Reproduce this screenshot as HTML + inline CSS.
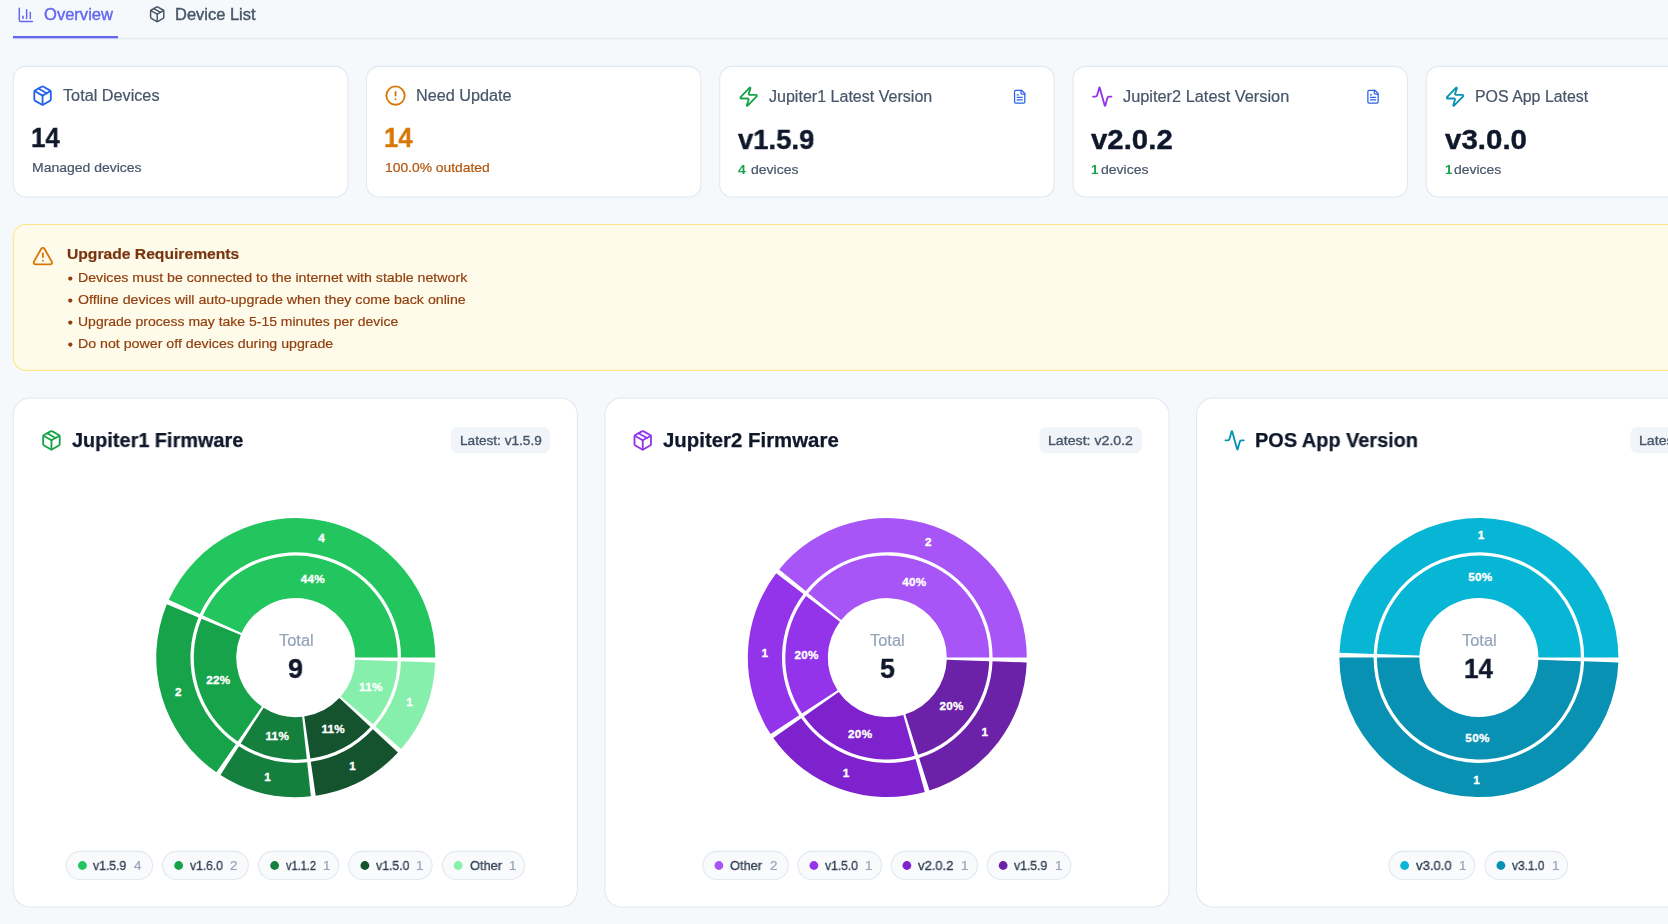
<!DOCTYPE html>
<html><head><meta charset="utf-8"><title>Overview</title>
<style>
*{box-sizing:border-box;margin:0;padding:0}
html,body{width:1668px;height:924px;overflow:hidden;background:#f6f9fc;font-family:"Liberation Sans",sans-serif;}
#root{position:relative;width:1668px;height:924px;overflow:hidden}
.t{position:absolute;white-space:pre;line-height:1;transform-origin:0 0;will-change:transform}
.pl{font-family:"Liberation Sans",sans-serif;font-weight:700;font-size:11.7px;letter-spacing:0.3px;fill:#fff;stroke:#fff;stroke-width:0.35px;text-anchor:middle}
svg.layer{position:absolute;left:0;top:0}
</style></head><body><div id="root">
<svg class="layer" width="1668" height="924" viewBox="0 0 1668 924">
<rect x="13" y="38.25" width="1700" height="1.1" fill="#e2e8f0"/>
<rect x="13" y="36.0" width="105" height="2.3" fill="#6366f1"/>
<rect x="13.27" y="66.40" width="334.50" height="130.60" rx="12.6" fill="#fff" stroke="#e2e8f0" stroke-width="1.1"/>
<rect x="366.50" y="66.40" width="334.50" height="130.60" rx="12.6" fill="#fff" stroke="#e2e8f0" stroke-width="1.1"/>
<rect x="719.73" y="66.40" width="334.50" height="130.60" rx="12.6" fill="#fff" stroke="#e2e8f0" stroke-width="1.1"/>
<rect x="1072.96" y="66.40" width="334.50" height="130.60" rx="12.6" fill="#fff" stroke="#e2e8f0" stroke-width="1.1"/>
<rect x="1426.19" y="66.40" width="334.50" height="130.60" rx="12.6" fill="#fff" stroke="#e2e8f0" stroke-width="1.1"/>
<rect x="13.27" y="224.45" width="1746.73" height="145.95" rx="12.6" fill="#fffbeb" stroke="#fde68a" stroke-width="1.1"/>
<rect x="13.27" y="398.00" width="564.13" height="509.00" rx="17.0" fill="#fff" stroke="#e2e8f0" stroke-width="1.1"/>
<rect x="604.87" y="398.00" width="564.13" height="509.00" rx="17.0" fill="#fff" stroke="#e2e8f0" stroke-width="1.1"/>
<rect x="1196.47" y="398.00" width="564.13" height="509.00" rx="17.0" fill="#fff" stroke="#e2e8f0" stroke-width="1.1"/>
<g transform="translate(17.10,6.00) scale(0.73333)" fill="none" stroke="#6366f1" stroke-width="2" stroke-linecap="round" stroke-linejoin="round"><path d="M3 3v16a2 2 0 0 0 2 2h16"/><path d="M18 17V9"/><path d="M13 17V5"/><path d="M8 17v-3"/></g>
<g transform="translate(148.40,5.40) scale(0.73333)" fill="none" stroke="#475569" stroke-width="2" stroke-linecap="round" stroke-linejoin="round"><path d="M11 21.73a2 2 0 0 0 2 0l7-4A2 2 0 0 0 21 16V8a2 2 0 0 0-1-1.73l-7-4a2 2 0 0 0-2 0l-7 4A2 2 0 0 0 3 8v8a2 2 0 0 0 1 1.73z"/><path d="M12 22V12"/><polyline points="3.29 7 12 12 20.71 7"/><path d="m7.5 4.27 9 5.15"/></g>
<g transform="translate(31.55,84.60) scale(0.91667)" fill="none" stroke="#2563eb" stroke-width="2" stroke-linecap="round" stroke-linejoin="round"><path d="M11 21.73a2 2 0 0 0 2 0l7-4A2 2 0 0 0 21 16V8a2 2 0 0 0-1-1.73l-7-4a2 2 0 0 0-2 0l-7 4A2 2 0 0 0 3 8v8a2 2 0 0 0 1 1.73z"/><path d="M12 22V12"/><polyline points="3.29 7 12 12 20.71 7"/><path d="m7.5 4.27 9 5.15"/></g>
<g transform="translate(384.55,84.60) scale(0.91667)" fill="none" stroke="#d97706" stroke-width="2" stroke-linecap="round" stroke-linejoin="round"><circle cx="12" cy="12" r="10"/><line x1="12" x2="12" y1="8" y2="12"/><line x1="12" x2="12.01" y1="16" y2="16"/></g>
<g transform="translate(737.65,85.70) scale(0.91667)" fill="none" stroke="#16a34a" stroke-width="2" stroke-linecap="round" stroke-linejoin="round"><path d="M4 14a1 1 0 0 1-.78-1.63l9.9-10.2a.5.5 0 0 1 .86.46l-1.92 6.02A1 1 0 0 0 13 10h7a1 1 0 0 1 .78 1.63l-9.9 10.2a.5.5 0 0 1-.86-.46l1.92-6.02A1 1 0 0 0 11 14z"/></g>
<g transform="translate(1012.00,89.00) scale(0.64167)" fill="none" stroke="#2d63ec" stroke-width="2" stroke-linecap="round" stroke-linejoin="round"><path d="M15 2H6a2 2 0 0 0-2 2v16a2 2 0 0 0 2 2h12a2 2 0 0 0 2-2V7Z"/><path d="M14 2v4a2 2 0 0 0 2 2h4"/><path d="M10 9H8"/><path d="M16 13H8"/><path d="M16 17H8"/></g>
<g transform="translate(1091.25,85.70) scale(0.91667)" fill="none" stroke="#9333ea" stroke-width="2" stroke-linecap="round" stroke-linejoin="round"><path d="M22 12h-2.48a2 2 0 0 0-1.93 1.46l-2.35 8.36a.25.25 0 0 1-.48 0L9.24 2.18a.25.25 0 0 0-.48 0l-2.35 8.36A2 2 0 0 1 4.49 12H2"/></g>
<g transform="translate(1365.30,89.00) scale(0.64167)" fill="none" stroke="#2d63ec" stroke-width="2" stroke-linecap="round" stroke-linejoin="round"><path d="M15 2H6a2 2 0 0 0-2 2v16a2 2 0 0 0 2 2h12a2 2 0 0 0 2-2V7Z"/><path d="M14 2v4a2 2 0 0 0 2 2h4"/><path d="M10 9H8"/><path d="M16 13H8"/><path d="M16 17H8"/></g>
<g transform="translate(1444.05,85.70) scale(0.91667)" fill="none" stroke="#0891b2" stroke-width="2" stroke-linecap="round" stroke-linejoin="round"><path d="M4 14a1 1 0 0 1-.78-1.63l9.9-10.2a.5.5 0 0 1 .86.46l-1.92 6.02A1 1 0 0 0 13 10h7a1 1 0 0 1 .78 1.63l-9.9 10.2a.5.5 0 0 1-.86-.46l1.92-6.02A1 1 0 0 0 11 14z"/></g>
<g transform="translate(31.85,245.10) scale(0.91667)" fill="none" stroke="#d97706" stroke-width="2" stroke-linecap="round" stroke-linejoin="round"><path d="m21.73 18-8-14a2 2 0 0 0-3.48 0l-8 14A2 2 0 0 0 4 21h16a2 2 0 0 0 1.73-3"/><path d="M12 9v4"/><path d="M12 17h.01"/></g>
<circle cx="70.3" cy="278.60" r="2.15" fill="#92400e"/>
<circle cx="70.3" cy="300.60" r="2.15" fill="#92400e"/>
<circle cx="70.3" cy="322.60" r="2.15" fill="#92400e"/>
<circle cx="70.3" cy="344.60" r="2.15" fill="#92400e"/>
<g transform="translate(40.45,429.30) scale(0.91667)" fill="none" stroke="#16a34a" stroke-width="2" stroke-linecap="round" stroke-linejoin="round"><path d="M11 21.73a2 2 0 0 0 2 0l7-4A2 2 0 0 0 21 16V8a2 2 0 0 0-1-1.73l-7-4a2 2 0 0 0-2 0l-7 4A2 2 0 0 0 3 8v8a2 2 0 0 0 1 1.73z"/><path d="M12 22V12"/><polyline points="3.29 7 12 12 20.71 7"/><path d="m7.5 4.27 9 5.15"/></g>
<g transform="translate(631.75,429.30) scale(0.91667)" fill="none" stroke="#9333ea" stroke-width="2" stroke-linecap="round" stroke-linejoin="round"><path d="M11 21.73a2 2 0 0 0 2 0l7-4A2 2 0 0 0 21 16V8a2 2 0 0 0-1-1.73l-7-4a2 2 0 0 0-2 0l-7 4A2 2 0 0 0 3 8v8a2 2 0 0 0 1 1.73z"/><path d="M12 22V12"/><polyline points="3.29 7 12 12 20.71 7"/><path d="m7.5 4.27 9 5.15"/></g>
<g transform="translate(1223.65,429.30) scale(0.91667)" fill="none" stroke="#0891b2" stroke-width="2" stroke-linecap="round" stroke-linejoin="round"><path d="M22 12h-2.48a2 2 0 0 0-1.93 1.46l-2.35 8.36a.25.25 0 0 1-.48 0L9.24 2.18a.25.25 0 0 0-.48 0l-2.35 8.36A2 2 0 0 1 4.49 12H2"/></g>
<rect x="450.75" y="427.00" width="99.25" height="26.20" rx="6.6" fill="#f1f5f9"/>
<rect x="1039.50" y="427.00" width="102.50" height="26.20" rx="6.6" fill="#f1f5f9"/>
<rect x="1630.50" y="427.00" width="102.50" height="26.20" rx="6.6" fill="#f1f5f9"/>
<path d="M397.750,657.600A102.0,102.0,0,0,0,202.893,615.391L241.583,632.978A59.5,59.5,0,0,1,355.250,657.600Z" fill="#22c55e"/>
<path d="M435.250,657.600A139.5,139.5,0,0,0,168.754,599.873L199.889,614.026A105.3,105.3,0,0,1,401.050,657.600Z" fill="#22c55e"/>
<path d="M201.476,618.658A102.0,102.0,0,0,0,237.732,741.492L261.906,706.537A59.5,59.5,0,0,1,240.757,634.884Z" fill="#16a34a"/>
<path d="M166.817,604.341A139.5,139.5,0,0,0,216.402,772.335L235.855,744.207A105.3,105.3,0,0,1,198.426,617.398Z" fill="#16a34a"/>
<path d="M240.695,743.466A102.0,102.0,0,0,0,306.805,758.999L302.199,716.749A59.5,59.5,0,0,1,263.635,707.689Z" fill="#15803d"/>
<path d="M220.455,775.035A139.5,139.5,0,0,0,310.870,796.278L307.163,762.280A105.3,105.3,0,0,1,238.914,746.244Z" fill="#15803d"/>
<path d="M310.337,758.552A102.0,102.0,0,0,0,370.483,727.019L339.344,698.094A59.5,59.5,0,0,1,304.259,716.488Z" fill="#14532d"/>
<path d="M315.700,795.666A139.5,139.5,0,0,0,397.958,752.541L372.901,729.265A105.3,105.3,0,0,1,310.809,761.818Z" fill="#14532d"/>
<path d="M372.860,724.369A102.0,102.0,0,0,0,397.688,661.160L355.214,659.677A59.5,59.5,0,0,1,340.731,696.548Z" fill="#86efac"/>
<path d="M401.209,748.916A139.5,139.5,0,0,0,435.165,662.468L400.986,661.275A105.3,105.3,0,0,1,375.355,726.529Z" fill="#86efac"/>
<text x="312.85" y="583" class="pl">44%</text>
<text x="321.66" y="542" class="pl">4</text>
<text x="218.30" y="684" class="pl">22%</text>
<text x="178.36" y="696" class="pl">2</text>
<text x="277.28" y="740" class="pl">11%</text>
<text x="267.75" y="781" class="pl">1</text>
<text x="333.24" y="733" class="pl">11%</text>
<text x="352.58" y="770" class="pl">1</text>
<text x="370.91" y="691" class="pl">11%</text>
<text x="409.68" y="706" class="pl">1</text>
<path d="M989.300,657.600A102.0,102.0,0,0,0,808.256,593.133L841.191,619.994A59.5,59.5,0,0,1,946.800,657.600Z" fill="#a855f7"/>
<path d="M1026.800,657.600A139.5,139.5,0,0,0,779.195,569.432L805.698,591.047A105.3,105.3,0,0,1,992.600,657.600Z" fill="#a855f7"/>
<path d="M806.054,595.931A102.0,102.0,0,0,0,801.950,713.451L837.513,690.180A59.5,59.5,0,0,1,839.906,621.626Z" fill="#9333ea"/>
<path d="M776.184,573.258A139.5,139.5,0,0,0,770.571,733.985L799.189,715.258A105.3,105.3,0,0,1,803.425,593.936Z" fill="#9333ea"/>
<path d="M803.951,716.396A102.0,102.0,0,0,0,914.730,755.843L903.301,714.908A59.5,59.5,0,0,1,838.680,691.898Z" fill="#7e22ce"/>
<path d="M773.308,738.012A139.5,139.5,0,0,0,924.814,791.961L915.617,759.021A105.3,105.3,0,0,1,801.255,718.298Z" fill="#7e22ce"/>
<path d="M918.142,754.825A102.0,102.0,0,0,0,989.238,661.160L946.764,659.677A59.5,59.5,0,0,1,905.291,714.315Z" fill="#6b21a8"/>
<path d="M929.481,790.570A139.5,139.5,0,0,0,1026.715,662.468L992.536,661.275A105.3,105.3,0,0,1,919.140,757.971Z" fill="#6b21a8"/>
<text x="914.39" y="586" class="pl">40%</text>
<text x="928.36" y="546" class="pl">2</text>
<text x="806.60" y="659" class="pl">20%</text>
<text x="764.97" y="657" class="pl">1</text>
<text x="860.21" y="738" class="pl">20%</text>
<text x="846.24" y="777" class="pl">1</text>
<text x="951.62" y="710" class="pl">20%</text>
<text x="984.80" y="736" class="pl">1</text>
<path d="M1580.900,657.600A102.0,102.0,0,0,0,1376.962,654.040L1419.436,655.523A59.5,59.5,0,0,1,1538.400,657.600Z" fill="#06b6d4"/>
<path d="M1618.400,657.600A139.5,139.5,0,0,0,1339.485,652.732L1373.664,653.925A105.3,105.3,0,0,1,1584.200,657.600Z" fill="#06b6d4"/>
<path d="M1376.900,657.600A102.0,102.0,0,0,0,1580.838,661.160L1538.364,659.677A59.5,59.5,0,0,1,1419.400,657.600Z" fill="#0891b2"/>
<path d="M1339.400,657.600A139.5,139.5,0,0,0,1618.315,662.468L1584.136,661.275A105.3,105.3,0,0,1,1373.600,657.600Z" fill="#0891b2"/>
<text x="1480.31" y="581" class="pl">50%</text>
<text x="1481.04" y="539" class="pl">1</text>
<text x="1477.49" y="742" class="pl">50%</text>
<text x="1476.76" y="784" class="pl">1</text>
<rect x="66.15" y="851.40" width="86.45" height="28.10" rx="14.05" fill="#f8fafc" stroke="#e2e8f0" stroke-width="1.1"/>
<circle cx="82.40" cy="865.5" r="4.4" fill="#22c55e"/>
<rect x="162.40" y="851.40" width="85.95" height="28.10" rx="14.05" fill="#f8fafc" stroke="#e2e8f0" stroke-width="1.1"/>
<circle cx="178.65" cy="865.5" r="4.4" fill="#16a34a"/>
<rect x="258.40" y="851.40" width="80.45" height="28.10" rx="14.05" fill="#f8fafc" stroke="#e2e8f0" stroke-width="1.1"/>
<circle cx="274.65" cy="865.5" r="4.4" fill="#15803d"/>
<rect x="348.65" y="851.40" width="83.45" height="28.10" rx="14.05" fill="#f8fafc" stroke="#e2e8f0" stroke-width="1.1"/>
<circle cx="364.90" cy="865.5" r="4.4" fill="#14532d"/>
<rect x="442.40" y="851.40" width="82.20" height="28.10" rx="14.05" fill="#f8fafc" stroke="#e2e8f0" stroke-width="1.1"/>
<circle cx="458.15" cy="865.5" r="4.4" fill="#86efac"/>
<rect x="702.90" y="851.40" width="85.45" height="28.10" rx="14.05" fill="#f8fafc" stroke="#e2e8f0" stroke-width="1.1"/>
<circle cx="718.90" cy="865.5" r="4.4" fill="#a855f7"/>
<rect x="797.90" y="851.40" width="83.70" height="28.10" rx="14.05" fill="#f8fafc" stroke="#e2e8f0" stroke-width="1.1"/>
<circle cx="813.90" cy="865.5" r="4.4" fill="#9333ea"/>
<rect x="891.15" y="851.40" width="86.45" height="28.10" rx="14.05" fill="#f8fafc" stroke="#e2e8f0" stroke-width="1.1"/>
<circle cx="906.90" cy="865.5" r="4.4" fill="#7e22ce"/>
<rect x="987.15" y="851.40" width="83.70" height="28.10" rx="14.05" fill="#f8fafc" stroke="#e2e8f0" stroke-width="1.1"/>
<circle cx="1003.15" cy="865.5" r="4.4" fill="#6b21a8"/>
<rect x="1388.90" y="851.40" width="85.95" height="28.10" rx="14.05" fill="#f8fafc" stroke="#e2e8f0" stroke-width="1.1"/>
<circle cx="1404.65" cy="865.5" r="4.4" fill="#06b6d4"/>
<rect x="1484.90" y="851.40" width="82.70" height="28.10" rx="14.05" fill="#f8fafc" stroke="#e2e8f0" stroke-width="1.1"/>
<circle cx="1500.90" cy="865.5" r="4.4" fill="#0891b2"/>
</svg>
<div class="t" style="left:44.00px;top:6.70px;font-size:15.6px;font-weight:400;color:#6366f1;transform:scaleX(1.0615);-webkit-text-stroke:0.4px #6366f1;">Overview</div>
<div class="t" style="left:175.00px;top:6.70px;font-size:15.6px;font-weight:400;color:#475569;transform:scaleX(1.0555);-webkit-text-stroke:0.4px #475569;">Device List</div>
<div class="t" style="left:63.00px;top:87.70px;font-size:15.6px;font-weight:400;color:#475569;transform:scaleX(1.0406);-webkit-text-stroke:0.2px #475569;">Total Devices</div>
<div class="t" style="left:31.00px;top:122.80px;font-size:28.4px;font-weight:700;color:#0f172a;transform:scaleX(0.9116);-webkit-text-stroke:0.4px #0f172a;">14</div>
<div class="t" style="left:32.00px;top:160.80px;font-size:13.4px;font-weight:400;color:#475569;transform:scaleX(1.0432);-webkit-text-stroke:0.2px #475569;">Managed devices</div>
<div class="t" style="left:415.75px;top:87.70px;font-size:15.6px;font-weight:400;color:#475569;transform:scaleX(1.0391);-webkit-text-stroke:0.2px #475569;">Need Update</div>
<div class="t" style="left:384.00px;top:122.80px;font-size:28.4px;font-weight:700;color:#d97706;transform:scaleX(0.9052);-webkit-text-stroke:0.4px #d97706;">14</div>
<div class="t" style="left:385.00px;top:160.80px;font-size:13.4px;font-weight:400;color:#b45309;transform:scaleX(1.0344);-webkit-text-stroke:0.2px #b45309;">100.0% outdated</div>
<div class="t" style="left:769.25px;top:88.70px;font-size:15.6px;font-weight:400;color:#475569;transform:scaleX(1.0291);-webkit-text-stroke:0.2px #475569;">Jupiter1 Latest Version</div>
<div class="t" style="left:738.25px;top:124.80px;font-size:28.4px;font-weight:700;color:#0f172a;transform:scaleX(0.9660);-webkit-text-stroke:0.4px #0f172a;">v1.5.9</div>
<div class="t" style="left:738.25px;top:162.80px;font-size:13.4px;font-weight:700;color:#16a34a;transform:scaleX(1.0398);">4</div>
<div class="t" style="left:750.50px;top:162.80px;font-size:13.4px;font-weight:400;color:#475569;transform:scaleX(1.0461);-webkit-text-stroke:0.2px #475569;">devices</div>
<div class="t" style="left:1122.50px;top:88.70px;font-size:15.6px;font-weight:400;color:#475569;transform:scaleX(1.0480);-webkit-text-stroke:0.2px #475569;">Jupiter2 Latest Version</div>
<div class="t" style="left:1091.25px;top:124.80px;font-size:28.4px;font-weight:700;color:#0f172a;transform:scaleX(1.0356);-webkit-text-stroke:0.4px #0f172a;">v2.0.2</div>
<div class="t" style="left:1091.10px;top:162.80px;font-size:13.4px;font-weight:700;color:#16a34a;">1</div>
<div class="t" style="left:1100.50px;top:162.80px;font-size:13.4px;font-weight:400;color:#475569;transform:scaleX(1.0461);-webkit-text-stroke:0.2px #475569;">devices</div>
<div class="t" style="left:1475.25px;top:88.70px;font-size:15.6px;font-weight:400;color:#475569;transform:scaleX(1.0206);-webkit-text-stroke:0.2px #475569;">POS App Latest</div>
<div class="t" style="left:1444.75px;top:124.80px;font-size:28.4px;font-weight:700;color:#0f172a;transform:scaleX(1.0388);-webkit-text-stroke:0.4px #0f172a;">v3.0.0</div>
<div class="t" style="left:1444.60px;top:162.80px;font-size:13.4px;font-weight:700;color:#16a34a;">1</div>
<div class="t" style="left:1453.75px;top:162.80px;font-size:13.4px;font-weight:400;color:#475569;transform:scaleX(1.0406);-webkit-text-stroke:0.2px #475569;">devices</div>
<div class="t" style="left:67.00px;top:245.80px;font-size:15.4px;font-weight:700;color:#78350f;transform:scaleX(1.0172);-webkit-text-stroke:0.2px #78350f;">Upgrade Requirements</div>
<div class="t" style="left:78.25px;top:270.80px;font-size:13.4px;font-weight:400;color:#92400e;transform:scaleX(1.0586);-webkit-text-stroke:0.2px #92400e;">Devices must be connected to the internet with stable network</div>
<div class="t" style="left:78.25px;top:292.80px;font-size:13.4px;font-weight:400;color:#92400e;transform:scaleX(1.0595);-webkit-text-stroke:0.2px #92400e;">Offline devices will auto-upgrade when they come back online</div>
<div class="t" style="left:78.25px;top:314.80px;font-size:13.4px;font-weight:400;color:#92400e;transform:scaleX(1.0443);-webkit-text-stroke:0.2px #92400e;">Upgrade process may take 5-15 minutes per device</div>
<div class="t" style="left:78.25px;top:336.80px;font-size:13.4px;font-weight:400;color:#92400e;transform:scaleX(1.0593);-webkit-text-stroke:0.2px #92400e;">Do not power off devices during upgrade</div>
<div class="t" style="left:71.75px;top:430.00px;font-size:20.0px;font-weight:700;color:#0f172a;transform:scaleX(0.9939);-webkit-text-stroke:0.25px #0f172a;">Jupiter1 Firmware</div>
<div class="t" style="left:663.25px;top:430.00px;font-size:20.0px;font-weight:700;color:#0f172a;transform:scaleX(1.0200);-webkit-text-stroke:0.25px #0f172a;">Jupiter2 Firmware</div>
<div class="t" style="left:1254.75px;top:430.00px;font-size:20.0px;font-weight:700;color:#0f172a;transform:scaleX(0.9954);-webkit-text-stroke:0.25px #0f172a;">POS App Version</div>
<div class="t" style="left:459.50px;top:433.80px;font-size:13.4px;font-weight:400;color:#475569;transform:scaleX(1.0167);-webkit-text-stroke:0.35px #475569;">Latest: v1.5.9</div>
<div class="t" style="left:1047.75px;top:433.80px;font-size:13.4px;font-weight:400;color:#475569;transform:scaleX(1.0571);-webkit-text-stroke:0.35px #475569;">Latest: v2.0.2</div>
<div class="t" style="left:1639.25px;top:433.80px;font-size:13.4px;font-weight:400;color:#475569;transform:scaleX(1.0571);-webkit-text-stroke:0.35px #475569;">Latest: v3.0.0</div>
<div class="t" style="left:278.55px;top:632.70px;font-size:15.6px;font-weight:400;color:#94a3b8;transform:scaleX(1.0530);-webkit-text-stroke:0.2px #94a3b8;">Total</div>
<div class="t" style="left:288.25px;top:653.80px;font-size:28.4px;font-weight:700;color:#0f172a;transform:scaleX(0.9496);-webkit-text-stroke:0.4px #0f172a;">9</div>
<div class="t" style="left:870.10px;top:632.70px;font-size:15.6px;font-weight:400;color:#94a3b8;transform:scaleX(1.0530);-webkit-text-stroke:0.2px #94a3b8;">Total</div>
<div class="t" style="left:879.80px;top:653.80px;font-size:28.4px;font-weight:700;color:#0f172a;transform:scaleX(0.9496);-webkit-text-stroke:0.4px #0f172a;">5</div>
<div class="t" style="left:1461.70px;top:632.70px;font-size:15.6px;font-weight:400;color:#94a3b8;transform:scaleX(1.0530);-webkit-text-stroke:0.2px #94a3b8;">Total</div>
<div class="t" style="left:1464.40px;top:653.80px;font-size:28.4px;font-weight:700;color:#0f172a;transform:scaleX(0.9179);-webkit-text-stroke:0.4px #0f172a;">14</div>
<div class="t" style="left:93.25px;top:858.80px;font-size:13.4px;font-weight:400;color:#334155;transform:scaleX(0.9113);-webkit-text-stroke:0.35px #334155;">v1.5.9</div>
<div class="t" style="left:133.75px;top:858.80px;font-size:13.4px;font-weight:400;color:#94a3b8;-webkit-text-stroke:0.2px #94a3b8;">4</div>
<div class="t" style="left:189.50px;top:858.80px;font-size:13.4px;font-weight:400;color:#334155;transform:scaleX(0.9045);-webkit-text-stroke:0.35px #334155;">v1.6.0</div>
<div class="t" style="left:229.50px;top:858.80px;font-size:13.4px;font-weight:400;color:#94a3b8;-webkit-text-stroke:0.2px #94a3b8;">2</div>
<div class="t" style="left:285.50px;top:858.80px;font-size:13.4px;font-weight:400;color:#334155;transform:scaleX(0.8223);-webkit-text-stroke:0.35px #334155;">v1.1.2</div>
<div class="t" style="left:322.50px;top:858.80px;font-size:13.4px;font-weight:400;color:#94a3b8;-webkit-text-stroke:0.2px #94a3b8;">1</div>
<div class="t" style="left:375.75px;top:858.80px;font-size:13.4px;font-weight:400;color:#334155;transform:scaleX(0.9182);-webkit-text-stroke:0.35px #334155;">v1.5.0</div>
<div class="t" style="left:416.00px;top:858.80px;font-size:13.4px;font-weight:400;color:#94a3b8;-webkit-text-stroke:0.2px #94a3b8;">1</div>
<div class="t" style="left:469.50px;top:858.80px;font-size:13.4px;font-weight:400;color:#334155;transform:scaleX(0.9552);-webkit-text-stroke:0.35px #334155;">Other</div>
<div class="t" style="left:508.75px;top:858.80px;font-size:13.4px;font-weight:400;color:#94a3b8;-webkit-text-stroke:0.2px #94a3b8;">1</div>
<div class="t" style="left:730.00px;top:858.80px;font-size:13.4px;font-weight:400;color:#334155;transform:scaleX(0.9552);-webkit-text-stroke:0.35px #334155;">Other</div>
<div class="t" style="left:769.50px;top:858.80px;font-size:13.4px;font-weight:400;color:#94a3b8;-webkit-text-stroke:0.2px #94a3b8;">2</div>
<div class="t" style="left:825.00px;top:858.80px;font-size:13.4px;font-weight:400;color:#334155;transform:scaleX(0.9045);-webkit-text-stroke:0.35px #334155;">v1.5.0</div>
<div class="t" style="left:865.00px;top:858.80px;font-size:13.4px;font-weight:400;color:#94a3b8;-webkit-text-stroke:0.2px #94a3b8;">1</div>
<div class="t" style="left:918.25px;top:858.80px;font-size:13.4px;font-weight:400;color:#334155;transform:scaleX(0.9730);-webkit-text-stroke:0.35px #334155;">v2.0.2</div>
<div class="t" style="left:961.25px;top:858.80px;font-size:13.4px;font-weight:400;color:#94a3b8;-webkit-text-stroke:0.2px #94a3b8;">1</div>
<div class="t" style="left:1014.25px;top:858.80px;font-size:13.4px;font-weight:400;color:#334155;transform:scaleX(0.9113);-webkit-text-stroke:0.35px #334155;">v1.5.9</div>
<div class="t" style="left:1054.50px;top:858.80px;font-size:13.4px;font-weight:400;color:#94a3b8;-webkit-text-stroke:0.2px #94a3b8;">1</div>
<div class="t" style="left:1416.00px;top:858.80px;font-size:13.4px;font-weight:400;color:#334155;transform:scaleX(0.9799);-webkit-text-stroke:0.35px #334155;">v3.0.0</div>
<div class="t" style="left:1459.00px;top:858.80px;font-size:13.4px;font-weight:400;color:#94a3b8;-webkit-text-stroke:0.2px #94a3b8;">1</div>
<div class="t" style="left:1512.25px;top:858.80px;font-size:13.4px;font-weight:400;color:#334155;transform:scaleX(0.8908);-webkit-text-stroke:0.35px #334155;">v3.1.0</div>
<div class="t" style="left:1551.75px;top:858.80px;font-size:13.4px;font-weight:400;color:#94a3b8;-webkit-text-stroke:0.2px #94a3b8;">1</div>
</div></body></html>
